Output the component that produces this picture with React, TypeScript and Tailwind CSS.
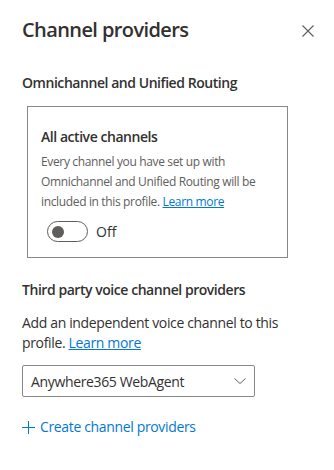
import { useState } from 'react'

export default function App() {
  const [on, setOn] = useState(false)

  return (
    <div
      className="w-[334px] h-[470px] bg-white text-[#323130] overflow-hidden"
      style={{ fontFamily: '"Open Sans", "Noto Sans", sans-serif' }}
    >
      {/* Header */}
      <div className="flex items-start justify-between pl-[22px] pr-[20px] pt-[16px]">
        <h1 className="text-[20px] leading-[28px] font-semibold tracking-[-0.6px]">Channel providers</h1>
        <button className="mt-[9px] w-3 h-3 text-[#605e5c]" aria-label="Close">
          <svg viewBox="0 0 12 12" width="12" height="12" stroke="currentColor" strokeWidth="1.1" fill="none">
            <path d="M0.5 0.5 L11.5 11.5 M11.5 0.5 L0.5 11.5" />
          </svg>
        </button>
      </div>

      <div className="px-[22px]">
        {/* Omnichannel section */}
        <h2 className="mt-[29px] text-[14px] leading-[20px] font-semibold tracking-[-0.45px]">
          Omnichannel and Unified Routing
        </h2>

        <div className="ml-[5px] mt-[13px] w-[261px] border border-[#8a8886] px-[13px] pt-[20px] pb-[15px]">
          <div className="text-[14px] leading-[20px] font-semibold tracking-[-0.45px]">All active channels</div>
          <p className="mt-[5px] text-[12px] leading-[20px] text-[#605e5c] tracking-[-0.35px]">
            Every channel you have set up with Omnichannel and Unified Routing will be included in this profile.{' '}
            <a className="text-[#0078d4] underline" href="#">
              Learn more
            </a>
          </p>
          <div className="mt-[9px] ml-[6px] flex items-center gap-[8px]">
            <button
              onClick={() => setOn(!on)}
              className="w-[41px] h-[21px] rounded-full border border-[#605e5c] flex items-center px-[4px]"
            >
              <span className="w-[12px] h-[12px] rounded-full bg-[#605e5c]" />
            </button>
            <span className="text-[14px] leading-[20px]">{on ? 'On' : 'Off'}</span>
          </div>
        </div>

        {/* Third party section */}
        <h2 className="mt-[22px] text-[14px] leading-[20px] font-semibold tracking-[-0.45px]">
          Third party voice channel providers
        </h2>
        <p className="mt-[13px] text-[14px] leading-[20px] tracking-[-0.35px]">
          Add an independent voice channel to this profile.{' '}
          <a className="text-[#0078d4] underline" href="#">
            Learn more
          </a>
        </p>

        <div className="mt-[12px] w-[233px] h-[32px] border border-[#8a8886] rounded-[2px] flex items-center justify-between pl-[8px] pr-[8px]">
          <span className="text-[14px] tracking-[-0.35px]">Anywhere365 WebAgent</span>
          <svg viewBox="0 0 12 6" width="12" height="6" fill="none" stroke="#605e5c" strokeWidth="1">
            <path d="M0.5 0.5 L6 5.5 L11.5 0.5" />
          </svg>
        </div>

        <button className="mt-[20px] flex items-center gap-[5px] text-[#0078d4]">
          <svg viewBox="0 0 13 13" width="13" height="13" stroke="currentColor" strokeWidth="1" fill="none">
            <path d="M6.5 0 V13 M0 6.5 H13" />
          </svg>
          <span className="text-[14px] leading-[20px] tracking-[-0.35px]">Create channel providers</span>
        </button>
      </div>
    </div>
  )
}
